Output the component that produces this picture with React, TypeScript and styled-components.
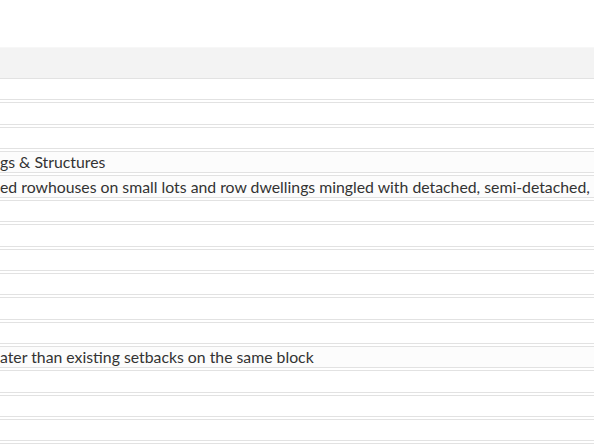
import React from 'react'
import styled, { createGlobalStyle } from 'styled-components'

const GlobalStyle = createGlobalStyle`
  html, body {
    margin: 0;
    padding: 0;
    background: #fff;
    overflow: hidden;
  }
`

const Page = styled.div`
  width: 594px;
  height: 445px;
  padding-top: 47px;
  box-sizing: border-box;
  overflow: hidden;
  font-family: Lato, 'Open Sans', sans-serif;
`

const HeaderBand = styled.div`
  height: 31px;
  background-color: #f3f3f3;
  border-top: 1px solid #f7f7f7;
  box-sizing: border-box;
`

const Rows = styled.div`
  display: flex;
  flex-direction: column;
  gap: 2px;
`

const Row = styled.div<{ $tint?: boolean }>`
  height: 22.36px;
  box-sizing: border-box;
  border-top: 1px solid #e2e2e2;
  border-bottom: 1px solid #e2e2e2;
  background-color: ${(p) => (p.$tint ? '#fcfcfc' : '#fff')};
  display: flex;
  align-items: center;
  overflow: hidden;
`

const Cell = styled.span`
  font-size: 15.8px;
  line-height: 20px;
  color: #333;
  white-space: nowrap;
`

const rows: string[] = [
  '',
  '',
  '',
  'gs & Structures',
  'ed rowhouses on small lots and row dwellings mingled with detached, semi-detached,',
  '',
  '',
  '',
  '',
  '',
  '',
  'ater than existing setbacks on the same block',
  '',
  '',
  '',
  '',
]

const App = () => {
  return (
    <>
      <GlobalStyle />
      <Page>
        <HeaderBand />
        <Rows>
          {rows.map((text, i) => (
            <Row key={i} $tint={!!text}>
              {text && <Cell>{text}</Cell>}
            </Row>
          ))}
        </Rows>
      </Page>
    </>
  )
}

export default App
